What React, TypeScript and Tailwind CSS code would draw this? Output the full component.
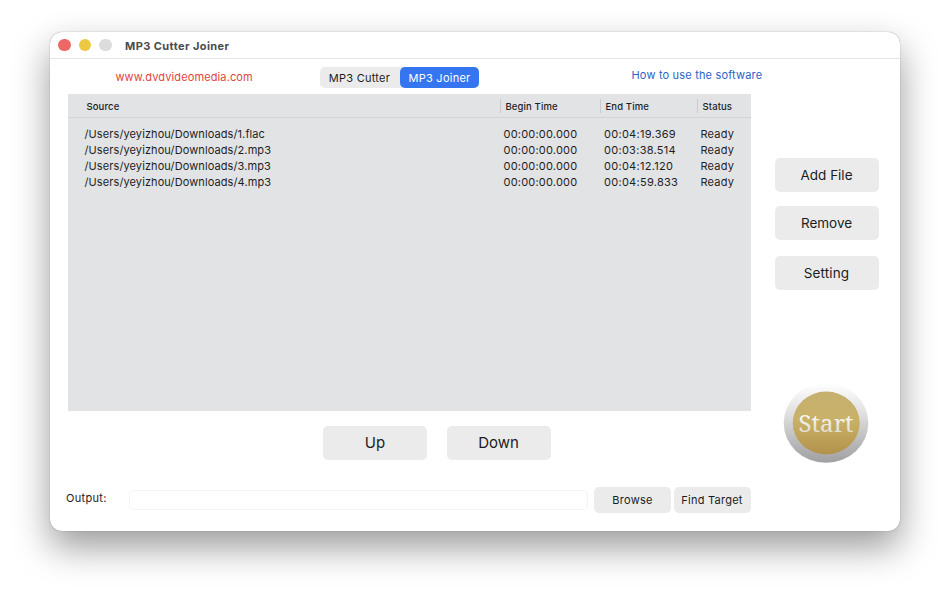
import { useState } from "react";

type Track = {
  source: string;
  begin: string;
  end: string;
  status: string;
};

const tracks: Track[] = [
  { source: "/Users/yeyizhou/Downloads/1.flac", begin: "00:00:00.000", end: "00:04:19.369", status: "Ready" },
  { source: "/Users/yeyizhou/Downloads/2.mp3", begin: "00:00:00.000", end: "00:03:38.514", status: "Ready" },
  { source: "/Users/yeyizhou/Downloads/3.mp3", begin: "00:00:00.000", end: "00:04:12.120", status: "Ready" },
  { source: "/Users/yeyizhou/Downloads/4.mp3", begin: "00:00:00.000", end: "00:04:59.833", status: "Ready" },
];

const bigButton =
  "flex h-[34px] w-[104px] items-center justify-center rounded-[5px] bg-[#ebebeb] text-[#1c1c1c]";
const smallButton =
  "flex h-[26px] w-[77px] items-center justify-center rounded-[5px] bg-[#ebebeb] pt-px text-[11px] tracking-[0.25px] text-[#1c1c1c]";

function TitleBar() {
  return (
    <div className="flex h-[27px] items-center border-b border-[#e4e4e4] pl-2">
      <div className="flex gap-2">
        <span className="h-[12.5px] w-[12.5px] rounded-full bg-[#ec6765]" />
        <span className="h-[12.5px] w-[12.5px] rounded-full bg-[#eec843]" />
        <span className="h-[12.5px] w-[12.5px] rounded-full bg-[#dcdcdc]" />
      </div>
      <h1 className="ml-[13.5px] pt-[2px] text-[11px] font-bold tracking-[0.42px] text-[#4b4b4b]">
        MP3 Cutter Joiner
      </h1>
    </div>
  );
}

function TrackTable() {
  return (
    <div className="h-[317px] w-[683px] bg-[#e2e3e5] text-[#1e1e1f]">
      <div className="flex h-6 items-center border-b border-[#d2d3d5] text-[9.5px] font-medium leading-[13px] tracking-[0.12px]">
        <div className="w-[432px] pl-[18.5px] pt-[2px]">Source</div>
        <div className="h-[14px] w-[100px] border-l border-[#c9cacc] pl-[4.5px] pt-px">Begin Time</div>
        <div className="h-[14px] w-[97px] border-l border-[#c9cacc] pl-[4.5px] pt-px">End Time</div>
        <div className="h-[14px] border-l border-[#c9cacc] pl-[4.5px] pt-px">Status</div>
      </div>
      <div className="pt-2 text-[11px]">
        {tracks.map((track) => (
          <div key={track.source} className="flex h-4 items-center">
            <div className="w-[435.5px] pl-[16.5px] tracking-[0.1px]">{track.source}</div>
            <div className="w-[100.5px] tracking-[0.2px]">{track.begin}</div>
            <div className="w-[96.5px] tracking-[0.28px]">{track.end}</div>
            <div className="tracking-[0.2px]">{track.status}</div>
          </div>
        ))}
      </div>
    </div>
  );
}

function StartButton() {
  return (
    <button type="button" aria-label="Start" className="h-[84px] w-[88px]">
      <svg viewBox="0 0 88 84" className="h-full w-full">
        <defs>
          <linearGradient id="ring" x1="0" y1="0" x2="0" y2="1">
            <stop offset="0" stopColor="#ffffff" />
            <stop offset="0.4" stopColor="#dedede" />
            <stop offset="0.75" stopColor="#b8b8ba" />
            <stop offset="1" stopColor="#a0a0a3" />
          </linearGradient>
          <linearGradient id="gold" x1="0" y1="0" x2="0" y2="1">
            <stop offset="0" stopColor="#c5b070" />
            <stop offset="0.45" stopColor="#c9b168" />
            <stop offset="1" stopColor="#b3924a" />
          </linearGradient>
          <linearGradient id="label" x1="0" y1="0" x2="0" y2="1">
            <stop offset="0.2" stopColor="#ffffff" />
            <stop offset="0.9" stopColor="#dcd7c8" />
          </linearGradient>
        </defs>
        <ellipse cx="43" cy="42" rx="42.3" ry="39.8" fill="url(#ring)" />
        <ellipse cx="43.2" cy="42" rx="33.5" ry="31.5" fill="url(#gold)" />
        <text
          x="43"
          y="50.5"
          textAnchor="middle"
          textLength="55"
          fontSize="24"
          fill="url(#label)"
          className="font-['Noto_Serif','DejaVu_Serif',serif]"
        >
          Start
        </text>
      </svg>
    </button>
  );
}

export default function App() {
  const [tab, setTab] = useState("joiner");
  const [output, setOutput] = useState("");

  const tabClass = (name: string) =>
    tab === name
      ? "flex h-full w-[79px] items-center justify-center rounded-[5px] bg-[#3576f0] text-white"
      : "flex h-full w-[80px] items-center justify-center pr-px text-[#1c1c1c]";

  return (
    <div className="h-[594px] w-[950px] overflow-hidden bg-white pl-[50px] pt-8 font-['Inter','Liberation_Sans',sans-serif]">
      <div className="flex h-[499px] w-[850px] flex-col rounded-[12px] bg-white shadow-[0_0_1px_rgba(0,0,0,0.5),0_16px_36px_rgba(0,0,0,0.4)]">
        <TitleBar />
        <div className="flex h-[35px] items-start">
          <a className="ml-[65.5px] mt-[9.5px] w-[204.5px] text-[11px] leading-[17px] tracking-[0.12px] text-[#e0463f]">
            www.dvdvideomedia.com
          </a>
          <div className="mt-2 flex h-[20.5px] rounded-[5px] bg-[#ebebeb] text-[11px] tracking-[0.25px]">
            <button type="button" className={tabClass("cutter")} onClick={() => setTab("cutter")}>
              <span className="pt-px">MP3 Cutter</span>
            </button>
            <button type="button" className={tabClass("joiner")} onClick={() => setTab("joiner")}>
              <span className="pt-px">MP3 Joiner</span>
            </button>
          </div>
          <a className="ml-[152.5px] mt-2 text-[11px] leading-[17px] tracking-[0.18px] text-[#2b62c9]">
            How to use the software
          </a>
        </div>
        <div className="flex flex-1">
          <div className="ml-[18px] flex w-[683px] flex-col">
            <TrackTable />
            <div className="mt-[15px] flex gap-[19.5px] pl-[255px] text-[15px]">
              <button type="button" className={bigButton}><span className="pt-px">Up</span></button>
              <button type="button" className={bigButton}><span className="pt-px">Down</span></button>
            </div>
            <div className="mt-[27px] flex">
              <label htmlFor="output" className="-ml-[2px] w-[63px] pt-[3px] text-[11px] leading-[17px] tracking-[0.3px] text-[#1c1c1c]">
                Output:
              </label>
              <input
                id="output"
                value={output}
                onChange={(e) => setOutput(e.target.value)}
                className="mt-[3px] h-5 w-[459px] rounded-[5px] border border-[#f4f4f4] px-2 text-[11px] outline-none"
              />
              <div className="ml-[6px] flex gap-[2.5px]">
                <button type="button" className={smallButton}>Browse</button>
                <button type="button" className={smallButton}>Find Target</button>
              </div>
            </div>
          </div>
          <div className="ml-[23.5px] flex w-[104px] flex-col items-center pt-16 text-[13.5px]">
            <button type="button" className={bigButton}>Add File</button>
            <button type="button" className={`${bigButton} mt-[14px]`}>Remove</button>
            <button type="button" className={`${bigButton} mt-4 tracking-[0.1px]`}>Setting</button>
            <div className="mt-[91px]">
              <StartButton />
            </div>
          </div>
        </div>
      </div>
    </div>
  );
}
